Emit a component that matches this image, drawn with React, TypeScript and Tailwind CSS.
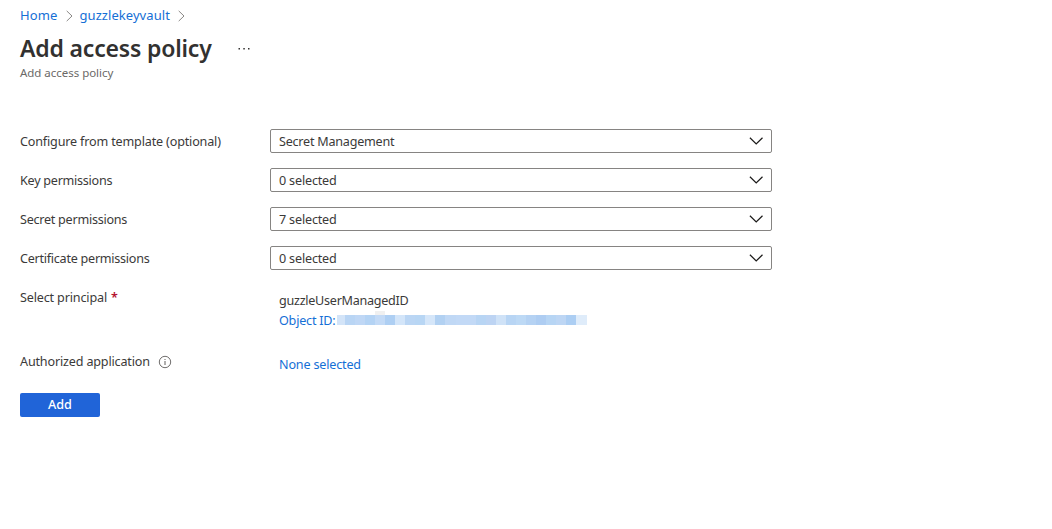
import React from "react";

const Chevron = () => (
  <svg width="14" height="8" viewBox="0 0 14 8" fill="none" stroke="#1b1a19" strokeWidth="1.2">
    <path d="M0.9 0.7 L7.2 6.9 L13.5 0.7" />
  </svg>
);

const Separator = () => (
  <svg className="mt-px" width="7" height="12" viewBox="0 0 7 12" fill="none" stroke="#8a8886" strokeWidth="1">
    <path d="M0.7 0.9 L6 6 L0.7 11.1" />
  </svg>
);

const fields = [
  { label: "Configure from template (optional)", value: "Secret Management", track: "tracking-[-0.17px]", valueTrack: "tracking-[-0.24px]" },
  { label: "Key permissions", value: "0 selected", track: "tracking-[-0.26px]", valueTrack: "tracking-[-0.18px]" },
  { label: "Secret permissions", value: "7 selected", track: "tracking-[-0.26px]", valueTrack: "tracking-[-0.18px]" },
  { label: "Certificate permissions", value: "0 selected", track: "tracking-[-0.26px]", valueTrack: "tracking-[-0.18px]" },
];

const maskCells = [
  "w-2 bg-[#d3e4f8]",
  "w-2.5 bg-[#b9d5f4]",
  "w-2.5 bg-[#bfd7f5]",
  "w-2.5 bg-[#b4d3f4]",
  "w-2.5 bg-[#c3daf6]",
  "w-2.5 bg-[#aecff3]",
  "w-2.5 bg-[#d3e5f9]",
  "w-2.5 bg-[#bbd6f4]",
  "w-2.5 bg-[#b8d6f4]",
  "w-2.5 bg-[#d5e6f9]",
  "w-2.5 bg-[#b2d1f2]",
  "w-[11px] bg-[#c0d8f5]",
  "w-2.5 bg-[#c2d9f6]",
  "w-2.5 bg-[#c2d9f6]",
  "w-2.5 bg-[#b8d5f4]",
  "w-2.5 bg-[#bdd4f3]",
  "w-2.5 bg-[#cfe2f7]",
  "w-2.5 bg-[#b8d5f4]",
  "w-2.5 bg-[#bdd9f5]",
  "w-2.5 bg-[#b5d2f3]",
  "w-2.5 bg-[#aecdf2]",
  "w-2.5 bg-[#b7d5f4]",
  "w-2.5 bg-[#bdd6f4]",
  "w-2.5 bg-[#accef3]",
  "w-[11px] bg-[#dfecfa]",
];

export default function App() {
  return (
    <main className="h-[529px] w-[1052px] overflow-hidden bg-white pl-5 font-['Noto_Sans',sans-serif] text-[12.6px] leading-5 text-[#3b3a39]">
      <nav className="flex h-[30px] items-center text-[13px] text-[#156fd6]">
        <a className="w-[37.5px] tracking-[0.1px]">Home</a>
        <span className="ml-2"><Separator /></span>
        <a className="ml-[7px] w-[91px] tracking-[0.06px]">guzzlekeyvault</a>
        <span className="ml-[7px]"><Separator /></span>
      </nav>
      <header className="h-[99px]">
        <div className="flex h-9 items-center">
          <h1 className="w-[192px] whitespace-nowrap text-[23px] leading-8 font-semibold tracking-[-0.18px] text-[#323130]">Add access policy</h1>
          <svg className="mt-0.5 ml-[26px]" width="12" height="2" fill="#323130">
            <rect x="0.5" width="1.5" height="1.5" />
            <rect x="5.3" width="1.5" height="1.5" />
            <rect x="10" width="1.5" height="1.5" />
          </svg>
        </div>
        <p className="text-[11.5px] leading-[14px] tracking-[-0.03px] text-[#6b6967]">Add access policy</p>
      </header>
      <div className="flex flex-col gap-[15px]">
        {fields.map((f) => (
          <div key={f.label} className="flex h-6 items-center">
            <label className="w-[250px] pt-0.5"><span className={f.track}>{f.label}</span></label>
            <div className="flex h-6 w-[502px] items-center justify-between rounded-xs border border-[#868482] px-2">
              <div className="pt-0.5"><span className={f.valueTrack}>{f.value}</span></div>
              <Chevron />
            </div>
          </div>
        ))}
      </div>
      <div className="mt-[15px] flex h-16">
        <div className="w-[259px] pt-[3px]"><span className="tracking-[-0.16px]">Select principal</span><span className="ml-1 font-semibold text-[#b4122f]">*</span></div>
        <div className="pt-1.5">
          <div className="tracking-[-0.27px]">guzzleUserManagedID</div>
          <div className="flex h-5">
            <span className="w-[58px] whitespace-nowrap tracking-[-0.22px] text-[#156fd6]">Object ID:</span>
            <span className="relative mt-1 flex h-2.5">
              <span className="absolute -top-1 left-[38px] h-1 w-2.5 bg-[#f0f0f0]" />
              {maskCells.map((c, i) => <span key={i} className={c} />)}
            </span>
          </div>
        </div>
      </div>
      <div className="flex h-11">
        <div className="flex h-6 w-[259px] items-center">
          <span className="w-[130px] whitespace-nowrap pt-0.5 tracking-[-0.17px]">Authorized application</span>
          <svg className="mt-px ml-2" width="14" height="14" viewBox="0 0 14 14" fill="none" stroke="#605e5c">
            <circle cx="7" cy="7" r="5.7" strokeWidth="0.9" />
            <path d="M7 6 V10 M7 4 V5" strokeWidth="1" />
          </svg>
        </div>
        <span className="pt-1.5 tracking-[-0.18px] text-[#156fd6]">None selected</span>
      </div>
      <button className="flex h-6 w-20 items-center justify-center rounded-xs bg-[#2064d8] font-medium text-white">Add</button>
    </main>
  );
}
